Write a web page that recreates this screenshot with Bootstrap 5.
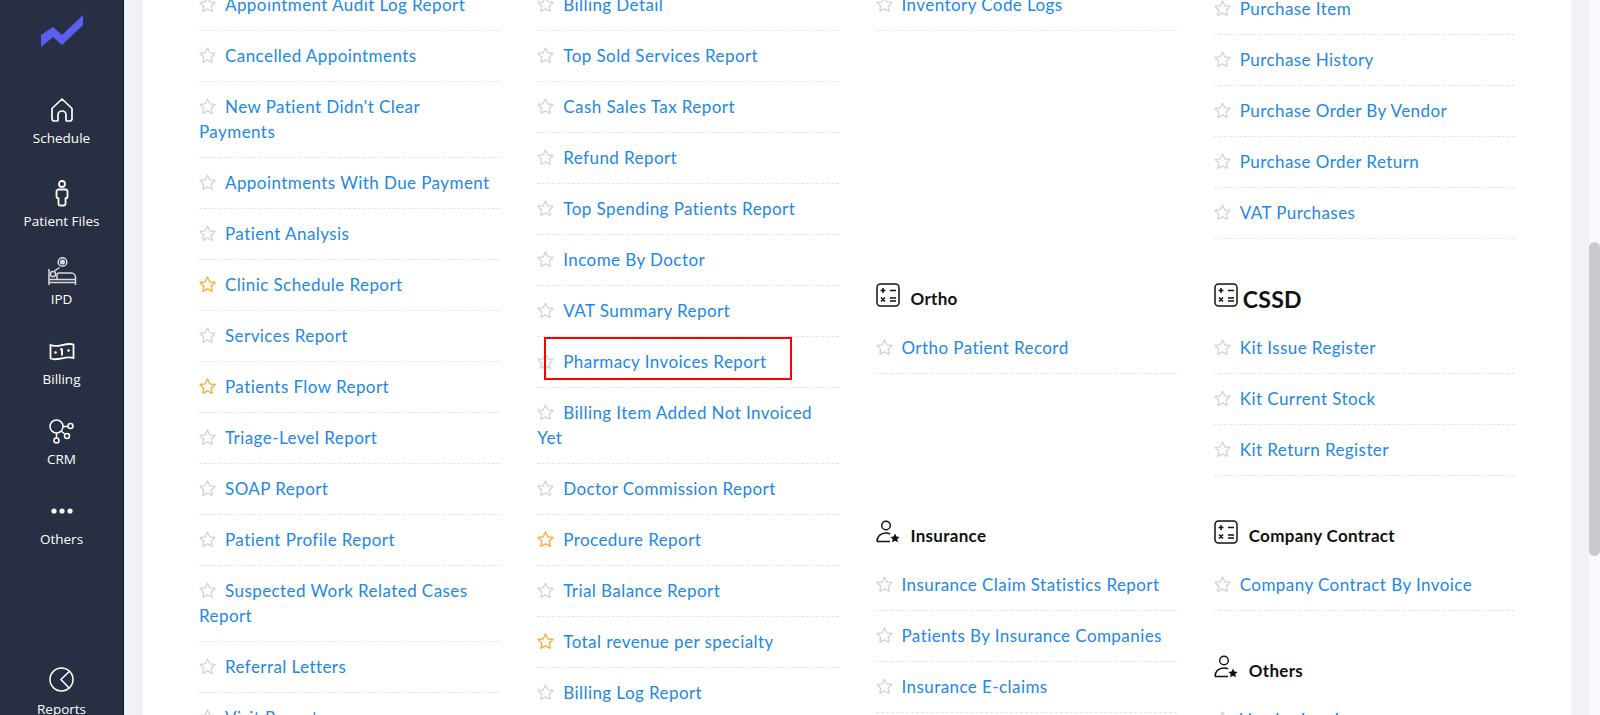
<!DOCTYPE html>
<html lang="en">
<head>
  <meta charset="UTF-8">
  <title>Reports</title>
  <meta name="viewport" content="width=device-width, initial-scale=1">
  <link href="https://cdn.jsdelivr.net/npm/bootstrap@5.3.0/dist/css/bootstrap.min.css" rel="stylesheet">
  <script src="https://cdn.jsdelivr.net/npm/bootstrap@5.3.0/dist/js/bootstrap.bundle.min.js"></script>
  <style>
    html, body { height: 100%; overflow: hidden; }
    body { background: #f1f2f5; font-family: "Lato", "Open Sans", sans-serif; }

    .app-shell { height: 715px; }

    /* left rail */
    .side-rail { width: 124px; background: #282f42; border-right: 1px solid #0f1530; overflow: hidden; }
    .side-logo { height: 95px; flex: none; padding: 15px 0 0 41px; }
    .side-item { height: 80px; flex: none; color: #fff; font-family: "Open Sans", sans-serif; font-size: 13.5px; text-decoration: none; }
    .side-item:hover { color: #fff; }
    .side-item.item-tall { height: 83px; }
    .side-item.item-short { height: 78px; }
    .side-item.item-last { margin-top: 90px; }
    .side-item.item-last svg { margin-top: -4px; }
    .side-icon { height: 30px; margin-bottom: 3px; }
    .side-text { line-height: 20px; }

    /* report area */
    .report-panel { margin-left: 19px; width: 1428px; background: #fff; padding: 0 56px; overflow: hidden; }
    .report-cols { --bs-gutter-x: 37px; margin-top: -20px; }
    .col-offset { padding-top: 4px; }

    .rep-list { margin: 0; padding: 0; list-style: none; }
    .rep-row { position: relative; padding: 12px 0 13px; font-size: 17px; line-height: 25px; letter-spacing: .43px; border-bottom: 1px dashed #e6e6e6; }
    .rep-row a { color: #2188e9; text-decoration: none; }
    .rep-star { width: 19px; height: 19px; margin: -4px 8px 0 -1px; vertical-align: middle; color: #d4d4d4; }
    .rep-star.is-fav { color: #ffa92e; }

    .rep-head { height: 45px; padding-bottom: 3px; font-size: 17px; font-weight: 700; letter-spacing: .3px; color: #111; }
    .rep-head.head-big { font-size: 23px; }
    .rep-head svg { width: 24px; height: 24px; margin-bottom: 8px; flex: none; }
    .gap-wide { gap: 11px; }
    .gap-thin { gap: 5px; }

    .sec-gap { margin-bottom: 39px; }
    .sec-gap-ortho { margin-bottom: 141px; }
    .sec-gap-top { margin-bottom: 247px; }

    .red-note { position: absolute; left: 7px; top: 0; width: 248px; height: 43px; border: 2px solid #f00; pointer-events: none; }

    .scroll-track { width: 11px; margin-left: 18px; background: #f9f9f9; }
    .scroll-thumb { height: 314px; margin-top: 242px; background: #c9c9c9; border-radius: 6px; }
  </style>
</head>
<body>
  <svg width="0" height="0" class="d-block position-absolute">
    <symbol id="star" viewBox="0 0 24 24"><path d="M12 2.6l2.9 6 6.6.9-4.8 4.6 1.2 6.5-5.9-3.1-5.9 3.1 1.2-6.5-4.8-4.6 6.6-.9z" fill="none" stroke="currentColor" stroke-width="1.7" stroke-linejoin="round"/></symbol>
    <symbol id="calc" viewBox="0 0 24 24"><rect x="1" y="1" width="22" height="22" rx="3.5" fill="none" stroke="#111" stroke-width="1.5"/><path d="M4.5 7.5h5M7 5v5M14 7.5h6M5 14.5l4 4M9 14.5l-4 4M14 15h6M14 18h6" fill="none" stroke="#111" stroke-width="1.5"/></symbol>
    <symbol id="user-star" viewBox="0 0 24 24"><circle cx="10" cy="5.5" r="4.3" fill="none" stroke="#111" stroke-width="1.4"/><path d="M1 21.5c0-5 3.5-8.5 9-8.5 1.600 0 3 .3 4.200 .9M1 21.500h13" fill="none" stroke="#111" stroke-width="1.4"/><path d="M19 13.500l1.400 3 3.200 .4-2.300 2.200 .6 3.200-2.900-1.600-2.900 1.600 .6-3.200-2.300-2.200 3.200-.4z" fill="#111"/></symbol>
  </svg>

  <div class="app-shell d-flex">
    <!-- Left rail -->
    <nav class="side-rail d-flex flex-column flex-shrink-0">
      <div class="side-logo">
        <svg width="44" height="34" viewBox="41 15 44 34"><path d="M41 35l12-8 9 8 21-20v10L62 45l-9-8-12 10z" fill="#5a5ff2"/></svg>
      </div>
      <a href="#" class="side-item item-tall d-flex flex-column align-items-center">
        <div class="side-icon d-flex align-items-center">
          <svg width="24" height="26" viewBox="0 0 24 26" fill="none" stroke="#fff" stroke-width="1.7" stroke-linejoin="round"><path d="M12 2L2 11.500V21.500a2.500 2.500 0 0 0 2.500 2.500H7a1 1 0 0 0 1-1v-5a4 4 0 0 1 8 0v5a1 1 0 0 0 1 1h2.500a2.500 2.500 0 0 0 2.500-2.500V11.500z"/></svg>
        </div>
        <span class="side-text">Schedule</span>
      </a>
      <a href="#" class="side-item item-short d-flex flex-column align-items-center">
        <div class="side-icon d-flex align-items-center">
          <svg width="14" height="27" viewBox="0 0 14 27" fill="none" stroke="#fff" stroke-width="1.800"><circle cx="7" cy="4" r="3"/><path d="M3.500 9.500h7a2 2 0 0 1 2 2v5a2 2 0 0 1-2 2v5.500a1.500 1.500 0 0 1-1.500 1.500H5a1.500 1.500 0 0 1-1.500-1.500v-5.500a2 2 0 0 1-2-2v-5a2 2 0 0 1 2-2z"/></svg>
        </div>
        <span class="side-text">Patient Files</span>
      </a>
      <a href="#" class="side-item d-flex flex-column align-items-center">
        <div class="side-icon d-flex align-items-center">
          <svg width="30" height="29" viewBox="0 0 30 29" fill="none" stroke="#d9dbe0" stroke-width="1.500"><circle cx="15.500" cy="5" r="4.300"/><circle cx="15.500" cy="5" r="1.800" fill="#d9dbe0"/><path d="M2 12v16M2 25.500h26M28.500 28v-7.500a4.500 4.500 0 0 0-4.500-4.500H12a2 2 0 0 0-2 2v4.500H2M28 22.500H10"/><circle cx="6" cy="17" r="2.600"/><path d="M7.500 14l5-3.500"/></svg>
        </div>
        <span class="side-text">IPD</span>
      </a>
      <a href="#" class="side-item d-flex flex-column align-items-center">
        <div class="side-icon d-flex align-items-center">
          <svg width="26" height="19" viewBox="0 0 26 19" fill="none" stroke="#fff" stroke-width="1.800"><path d="M1.500 3c7 3.500 15-3 23-.5v13.500c-8-2.500-16 3.500-23 .5z"/><path d="M13 6.500v7M11.500 8l1.500-1.500" stroke-width="2"/><circle cx="6.500" cy="10.500" r="1.300" fill="#fff" stroke="none"/><circle cx="19.500" cy="8.500" r="1.300" fill="#fff" stroke="none"/></svg>
        </div>
        <span class="side-text">Billing</span>
      </a>
      <a href="#" class="side-item d-flex flex-column align-items-center">
        <div class="side-icon d-flex align-items-center">
          <svg width="25" height="25" viewBox="0 0 25 25" fill="none" stroke="#fff" stroke-width="1.500"><circle cx="7.500" cy="7.500" r="6.500"/><circle cx="21.500" cy="7" r="2.500"/><circle cx="18" cy="17" r="2.500"/><circle cx="7.500" cy="21.500" r="2.500"/><path d="M14 7.500h5M12 12l4.500 3.500M7.500 14v5"/></svg>
        </div>
        <span class="side-text">CRM</span>
      </a>
      <a href="#" class="side-item d-flex flex-column align-items-center">
        <div class="side-icon d-flex align-items-center">
          <svg width="22" height="6" viewBox="0 0 22 6" fill="#fff"><circle cx="3" cy="3" r="2.600"/><circle cx="11" cy="3" r="2.600"/><circle cx="19" cy="3" r="2.600"/></svg>
        </div>
        <span class="side-text">Others</span>
      </a>
      <a href="#" class="side-item item-last d-flex flex-column align-items-center">
        <div class="side-icon d-flex align-items-center">
          <svg width="25" height="25" viewBox="0 0 25 25" fill="none" stroke="#fff" stroke-width="1.500"><circle cx="12.500" cy="12.500" r="11.500"/><path d="M20.500 4.300L12 12.500l8 8.500"/></svg>
        </div>
        <span class="side-text">Reports</span>
      </a>
    </nav>

    <!-- Report lists -->
    <main class="report-panel flex-shrink-0">
      <div class="row report-cols">
        <div class="col-3">
          <ul class="rep-list">
            <li class="rep-row"><svg class="rep-star"><use href="#star"/></svg><a href="#">Appointment Audit Log Report</a></li>
            <li class="rep-row"><svg class="rep-star"><use href="#star"/></svg><a href="#">Cancelled Appointments</a></li>
            <li class="rep-row"><svg class="rep-star"><use href="#star"/></svg><a href="#">New Patient Didn't Clear Payments</a></li>
            <li class="rep-row"><svg class="rep-star"><use href="#star"/></svg><a href="#">Appointments With Due Payment</a></li>
            <li class="rep-row"><svg class="rep-star"><use href="#star"/></svg><a href="#">Patient Analysis</a></li>
            <li class="rep-row"><svg class="rep-star is-fav"><use href="#star"/></svg><a href="#">Clinic Schedule Report</a></li>
            <li class="rep-row"><svg class="rep-star"><use href="#star"/></svg><a href="#">Services Report</a></li>
            <li class="rep-row"><svg class="rep-star is-fav"><use href="#star"/></svg><a href="#">Patients Flow Report</a></li>
            <li class="rep-row"><svg class="rep-star"><use href="#star"/></svg><a href="#">Triage-Level Report</a></li>
            <li class="rep-row"><svg class="rep-star"><use href="#star"/></svg><a href="#">SOAP Report</a></li>
            <li class="rep-row"><svg class="rep-star"><use href="#star"/></svg><a href="#">Patient Profile Report</a></li>
            <li class="rep-row"><svg class="rep-star"><use href="#star"/></svg><a href="#">Suspected Work Related Cases Report</a></li>
            <li class="rep-row"><svg class="rep-star"><use href="#star"/></svg><a href="#">Referral Letters</a></li>
            <li class="rep-row"><svg class="rep-star"><use href="#star"/></svg><a href="#">Visit Report</a></li>
          </ul>
        </div>
        <div class="col-3">
          <ul class="rep-list">
            <li class="rep-row"><svg class="rep-star"><use href="#star"/></svg><a href="#">Billing Detail</a></li>
            <li class="rep-row"><svg class="rep-star"><use href="#star"/></svg><a href="#">Top Sold Services Report</a></li>
            <li class="rep-row"><svg class="rep-star"><use href="#star"/></svg><a href="#">Cash Sales Tax Report</a></li>
            <li class="rep-row"><svg class="rep-star"><use href="#star"/></svg><a href="#">Refund Report</a></li>
            <li class="rep-row"><svg class="rep-star"><use href="#star"/></svg><a href="#">Top Spending Patients Report</a></li>
            <li class="rep-row"><svg class="rep-star"><use href="#star"/></svg><a href="#">Income By Doctor</a></li>
            <li class="rep-row"><svg class="rep-star"><use href="#star"/></svg><a href="#">VAT Summary Report</a></li>
            <li class="rep-row"><svg class="rep-star"><use href="#star"/></svg><a href="#">Pharmacy Invoices Report</a><div class="red-note"></div></li>
            <li class="rep-row"><svg class="rep-star"><use href="#star"/></svg><a href="#">Billing Item Added Not Invoiced Yet</a></li>
            <li class="rep-row"><svg class="rep-star"><use href="#star"/></svg><a href="#">Doctor Commission Report</a></li>
            <li class="rep-row"><svg class="rep-star is-fav"><use href="#star"/></svg><a href="#">Procedure Report</a></li>
            <li class="rep-row"><svg class="rep-star"><use href="#star"/></svg><a href="#">Trial Balance Report</a></li>
            <li class="rep-row"><svg class="rep-star is-fav"><use href="#star"/></svg><a href="#">Total revenue per specialty</a></li>
            <li class="rep-row"><svg class="rep-star"><use href="#star"/></svg><a href="#">Billing Log Report</a></li>
          </ul>
        </div>
        <div class="col-3">
          <ul class="rep-list sec-gap-top">
            <li class="rep-row"><svg class="rep-star"><use href="#star"/></svg><a href="#">Inventory Code Logs</a></li>
          </ul>
          <div class="rep-head d-flex align-items-center gap-wide"><svg><use href="#calc"/></svg><span>Ortho</span></div>
          <ul class="rep-list sec-gap-ortho">
            <li class="rep-row"><svg class="rep-star"><use href="#star"/></svg><a href="#">Ortho Patient Record</a></li>
          </ul>
          <div class="rep-head d-flex align-items-center gap-wide"><svg><use href="#user-star"/></svg><span>Insurance</span></div>
          <ul class="rep-list">
            <li class="rep-row"><svg class="rep-star"><use href="#star"/></svg><a href="#">Insurance Claim Statistics Report</a></li>
            <li class="rep-row"><svg class="rep-star"><use href="#star"/></svg><a href="#">Patients By Insurance Companies</a></li>
            <li class="rep-row"><svg class="rep-star"><use href="#star"/></svg><a href="#">Insurance E-claims</a></li>
          </ul>
        </div>
        <div class="col-3 col-offset">
          <ul class="rep-list sec-gap">
            <li class="rep-row"><svg class="rep-star"><use href="#star"/></svg><a href="#">Purchase Item</a></li>
            <li class="rep-row"><svg class="rep-star"><use href="#star"/></svg><a href="#">Purchase History</a></li>
            <li class="rep-row"><svg class="rep-star"><use href="#star"/></svg><a href="#">Purchase Order By Vendor</a></li>
            <li class="rep-row"><svg class="rep-star"><use href="#star"/></svg><a href="#">Purchase Order Return</a></li>
            <li class="rep-row"><svg class="rep-star"><use href="#star"/></svg><a href="#">VAT Purchases</a></li>
          </ul>
          <div class="rep-head head-big d-flex align-items-center gap-thin"><svg><use href="#calc"/></svg><span>CSSD</span></div>
          <ul class="rep-list sec-gap">
            <li class="rep-row"><svg class="rep-star"><use href="#star"/></svg><a href="#">Kit Issue Register</a></li>
            <li class="rep-row"><svg class="rep-star"><use href="#star"/></svg><a href="#">Kit Current Stock</a></li>
            <li class="rep-row"><svg class="rep-star"><use href="#star"/></svg><a href="#">Kit Return Register</a></li>
          </ul>
          <div class="rep-head d-flex align-items-center gap-wide"><svg><use href="#calc"/></svg><span>Company Contract</span></div>
          <ul class="rep-list sec-gap">
            <li class="rep-row"><svg class="rep-star"><use href="#star"/></svg><a href="#">Company Contract By Invoice</a></li>
          </ul>
          <div class="rep-head d-flex align-items-center gap-wide"><svg><use href="#user-star"/></svg><span>Others</span></div>
          <ul class="rep-list">
            <li class="rep-row"><svg class="rep-star"><use href="#star"/></svg><a href="#">Vendor Invoices</a></li>
          </ul>
        </div>
      </div>
    </main>

    <!-- Page scrollbar -->
    <div class="scroll-track flex-shrink-0"><div class="scroll-thumb"></div></div>
  </div>
</body>
</html>
